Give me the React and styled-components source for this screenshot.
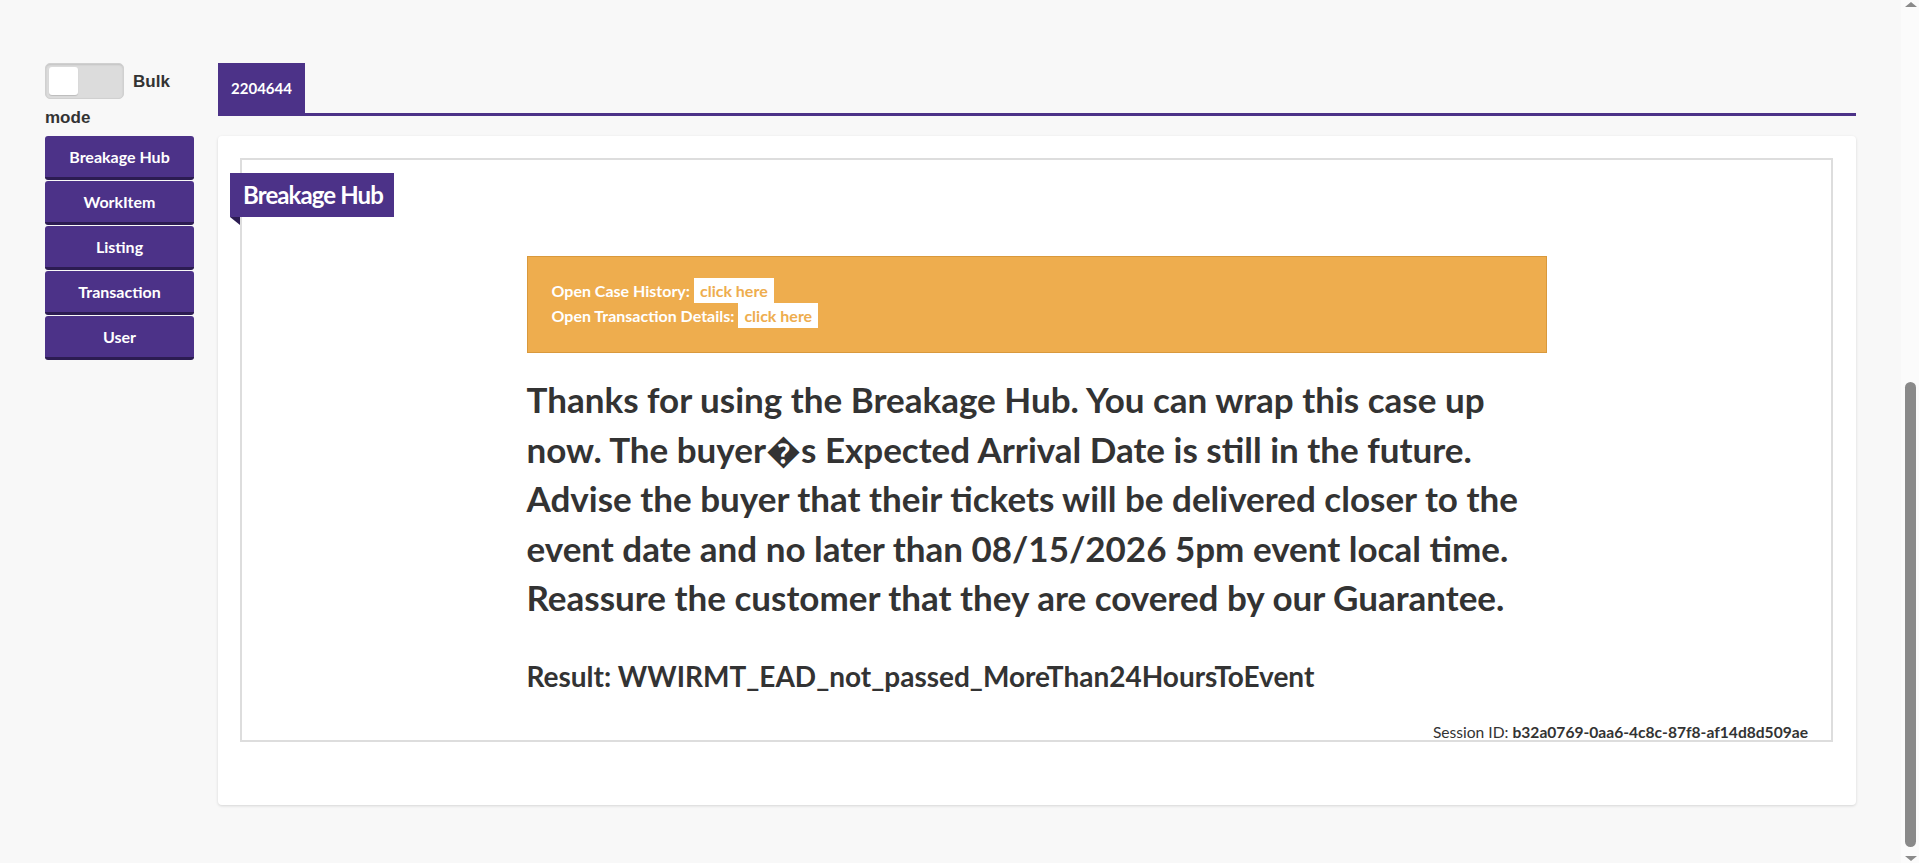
import React from "react";
import styled, { createGlobalStyle } from "styled-components";

const purple = "#4c3288";
const purpleDark = "#2c1c52";
const orange = "#eead4e";

const GlobalStyle = createGlobalStyle`
  body {
    margin: 0;
    background: #f8f8f8;
    color: #333;
    font-family: Lato, "Open Sans", sans-serif;
  }
`;

// stand-in for the browser's classic scrollbar, scrolled to the bottom
const ScrollTrack = styled.div`
  position: fixed;
  top: 0;
  right: 0;
  bottom: 0;
  width: 18px;
  background: #fbfbfb;

  &::before,
  &::after {
    content: "";
    position: absolute;
    left: 4px;
    width: 0;
    height: 0;
    border-left: 6px solid transparent;
    border-right: 6px solid transparent;
  }
  &::before {
    top: 2px;
    border-bottom: 5px solid #8a8a8a;
  }
  &::after {
    bottom: 2px;
    border-top: 5px solid #8a8a8a;
  }
`;

const ScrollThumb = styled.div`
  position: absolute;
  left: 4px;
  top: 382px;
  width: 11px;
  height: 465px;
  background: #8a8a8a;
  border-radius: 6px;
`;

const Layout = styled.div`
  display: flex;
  align-items: flex-start;
  gap: 24px;
  padding: 63px 63px 58px 45px;
`;

const Sidebar = styled.aside`
  width: 149px;
  flex-shrink: 0;
`;

const BulkLabel = styled.label`
  display: block;
  font-family: "Liberation Sans", Arial, sans-serif;
  font-size: 17px;
  font-weight: 700;
  line-height: 36px;
  color: #333;
`;

const Switch = styled.span`
  display: inline-block;
  position: relative;
  box-sizing: border-box;
  width: 79px;
  height: 36px;
  margin-right: 9px;
  vertical-align: -12px;
  background: #dcdcdc;
  border: 1px solid #d0d0d0;
  border-radius: 5px;
  box-shadow: inset 0 1px 2px rgba(0, 0, 0, 0.12);

  &::before {
    content: "";
    position: absolute;
    left: 3px;
    top: 3px;
    width: 29px;
    height: 28px;
    background: #fff;
    border-radius: 3px;
    box-shadow: 0 1px 1px rgba(0, 0, 0, 0.15);
  }
`;

const NavButton = styled.button`
  display: block;
  width: 149px;
  height: 44px;
  margin: 0 0 1px;
  padding: 0;
  background: ${purple};
  color: #fff;
  border: none;
  border-bottom: 3px solid ${purpleDark};
  border-radius: 3px;
  font-family: Lato, sans-serif;
  font-size: 16px;
  font-weight: 700;
  cursor: pointer;
`;

const Main = styled.main`
  flex: 1;
  min-width: 0;
`;

const TabBar = styled.div`
  display: flex;
  border-bottom: 3px solid ${purple};
`;

const Tab = styled.div`
  width: 87px;
  height: 50px;
  display: flex;
  align-items: center;
  justify-content: center;
  background: ${purple};
  color: #fff;
  font-size: 15px;
  font-weight: 700;
`;

const Card = styled.section`
  margin-top: 20px;
  padding: 22px 23px 63px 22px;
  background: #fff;
  border-radius: 4px;
  box-shadow: 0 1px 3px rgba(0, 0, 0, 0.14);
`;

const Panel = styled.div`
  border: 2px solid #dddddd;
  padding-top: 13px;
`;

const Ribbon = styled.h2`
  position: relative;
  display: inline-block;
  margin: 0 0 0 -12px;
  height: 44px;
  padding: 0 11px 0 13px;
  background: ${purple};
  color: #fff;
  font-size: 24px;
  font-weight: 700;
  letter-spacing: -0.9px;
  line-height: 44px;

  &::after {
    content: "";
    position: absolute;
    left: 0;
    top: 100%;
    width: 0;
    height: 0;
    border-top: 8px solid ${purpleDark};
    border-left: 10px solid transparent;
  }
`;

const Content = styled.div`
  width: 1020px;
  margin: 39px auto 0;
`;

const Notice = styled.div`
  background: ${orange};
  border: 1px solid #d9993c;
  padding: 21px 24px 24px;
  color: #fff;
  font-size: 16px;
  font-weight: 700;
`;

const NoticeRow = styled.div`
  height: 25px;
  line-height: 25px;
`;

const NoticeLink = styled.a`
  display: inline-block;
  margin-left: 4px;
  padding: 0 6px;
  background: #fff;
  color: ${orange};
  line-height: 25px;
  vertical-align: top;
  text-decoration: none;
`;

const Message = styled.p`
  margin: 22px 0 0;
  font-size: 35px;
  font-weight: 700;
  line-height: 49.5px;
  color: #333;
`;

const Result = styled.p`
  margin: 37px 0 0;
  font-size: 28px;
  font-weight: 700;
  line-height: 1.2;
  color: #333;
`;

const SessionLine = styled.div`
  margin-top: 31px;
  padding-right: 23px;
  text-align: right;
  font-size: 15.6px;
  line-height: 16px;
  color: #333;

  b {
    font-weight: 700;
  }
`;

const navItems = ["Breakage Hub", "WorkItem", "Listing", "Transaction", "User"];

export default function App() {
  return (
    <>
      <GlobalStyle />
      <Layout>
        <Sidebar>
          <BulkLabel>
            <Switch />
            Bulk mode
          </BulkLabel>
          {navItems.map((item) => (
            <NavButton key={item}>{item}</NavButton>
          ))}
        </Sidebar>
        <Main>
          <TabBar>
            <Tab>2204644</Tab>
          </TabBar>
          <Card>
            <Panel>
              <Ribbon>Breakage Hub</Ribbon>
              <Content>
                <Notice>
                  <NoticeRow>
                    Open Case History:<NoticeLink href="#">click here</NoticeLink>
                  </NoticeRow>
                  <NoticeRow>
                    Open Transaction Details:<NoticeLink href="#">click here</NoticeLink>
                  </NoticeRow>
                </Notice>
                <Message>
                  Thanks for using the Breakage Hub. You can wrap this case up now. The
                  buyer{"\uFFFD"}s Expected Arrival Date is still in the future. Advise the
                  buyer that their tickets will be delivered closer to the event date and
                  no later than 08/15/2026 5pm event local time. Reassure the customer that
                  they are covered by our Guarantee.
                </Message>
                <Result>Result: WWIRMT_EAD_not_passed_MoreThan24HoursToEvent</Result>
              </Content>
              <SessionLine>
                Session ID: <b>b32a0769-0aa6-4c8c-87f8-af14d8d509ae</b>
              </SessionLine>
            </Panel>
          </Card>
        </Main>
      </Layout>
      <ScrollTrack>
        <ScrollThumb />
      </ScrollTrack>
    </>
  );
}
